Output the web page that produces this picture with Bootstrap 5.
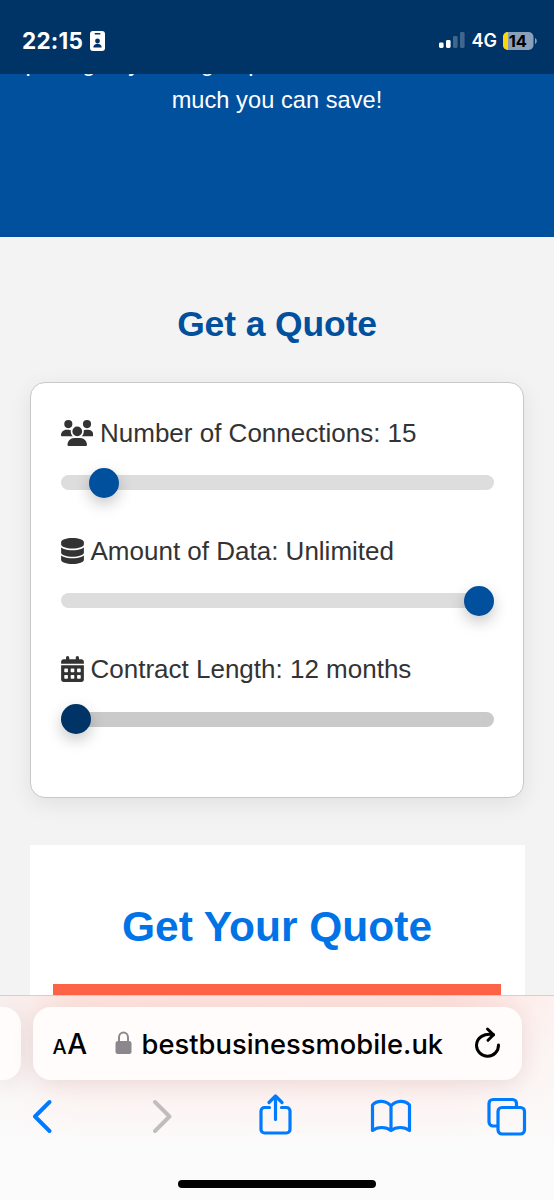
<!DOCTYPE html>
<html lang="en">
<head>
<meta charset="utf-8">
<meta name="viewport" content="width=device-width, initial-scale=1">
<title>Best Business Mobile</title>
<link href="https://cdn.jsdelivr.net/npm/bootstrap@5.3.0/dist/css/bootstrap.min.css" rel="stylesheet">
<style>
  body { font-family: "Liberation Sans", Arial, sans-serif; background: #f3f3f3; color: #333; }
  svg { display: block; flex: none; }
  .screen { width: 554px; height: 1200px; }
  .status { height: 73.5px; background: #036; padding: 8px 16px 0 22px; font-family: Inter, sans-serif; z-index: 2; }
  .clock { font-size: 22.5px; font-weight: 700; letter-spacing: .25px; line-height: 30px; }
  .network { font-size: 18px; font-weight: 600; line-height: 30px; margin: 0 2px 0 7px; }
  .page-view { margin-top: -73.5px; }
  .hero { height: 236.5px; padding-top: 44.5px; background: #00509e; color: #fff; font-size: 23.6px; line-height: 37.8px; letter-spacing: .05px; }
  .hero-text { padding-left: 25.5px; }
  .hero-text span { display: block; white-space: nowrap; }
  .hero-text .closing { margin-left: -25.5px; }
  .quote-title { margin: 66px 0 37px; font-size: 35.45px; line-height: 42px; font-weight: 700; color: #00509e; letter-spacing: -.1px; }
  .quote-card { margin: 0 30px; height: 416px; border: 1.5px solid #c8c8c8; border-radius: 15px; padding: 29px 29.5px 0; box-shadow: 0 6px 22px rgba(0,0,0,.08); }
  .slider-label { font-size: 26px; line-height: 42px; gap: 7px; height: 42px; }
  .slider-label svg { fill: #333; }
  .slider-row { height: 118.2px; }
  .quote-range { height: 30px; margin-top: 14.3px; display: block; }
  .quote-range::-webkit-slider-runnable-track { height: 15px; border-radius: 8px; background: #ddd; }
  .quote-range::-webkit-slider-thumb { width: 30px; height: 30px; margin-top: -7.5px; background: #00509e; box-shadow: 0 6px 15px rgba(0,0,0,.22); }
  .quote-range.pressed::-webkit-slider-runnable-track { background: #cacaca; }
  .quote-range.pressed::-webkit-slider-thumb { background: #036; }
  .form-panel { margin: 47px 29.5px 0; background: #fff; padding: 56.5px 23.5px 0; height: 152px; }
  .form-panel h2 { font-size: 42.5px; line-height: 52px; font-weight: 700; color: #0073e6; margin: 0 0 30.5px; }
  .form-bar { height: 13px; background: #ff6347; }
  .chrome { height: 205px; border-top: 1.5px solid #d9cdcd; font-family: Inter, sans-serif; color: #000; z-index: 3;
    background: linear-gradient(180deg, rgba(251,251,251,0) 0, #fbfbfb 150px), linear-gradient(90deg, #f8f1f0 0, #fee3de 15%, #fee1dc 82%, #fcf1ef 100%); }
  .tabs-row { padding-top: 11px; gap: 12px; }
  .tab-prev, .address { height: 73px; background: #fffcfb; box-shadow: 0 4px 22px rgba(90,40,40,.11); }
  .tab-prev { width: 20.5px; border-radius: 0 18px 18px 0; }
  .address { width: 489px; border-radius: 18px; padding: 3px 20px 0 20px; }
  .aa-small { font-size: 20px; } .aa-big { font-size: 28px; margin-left: .5px; }
  .aa { font-weight: 500; line-height: 34px; width: 62px; padding-top: 2px; }
  .host { font-size: 27.3px; font-weight: 500; letter-spacing: .03px; margin-left: 10px; }
  .tools { margin: 13px 0 0 32px; height: 44px; }
  .home { width: 198px; height: 8px; background: #000; margin: 43px auto 0; border-radius: 4px; }
</style>
</head>
<body>
<div class="screen d-flex flex-column overflow-hidden">
  <header class="status d-flex align-items-center justify-content-between text-white flex-shrink-0 position-relative">
    <div class="d-flex align-items-center">
      <span class="clock">22:15</span>
      <svg style="margin-left:7px" width="15" height="20" viewBox="0 0 15 20"><rect width="15" height="20" rx="3" fill="#fff"/><rect x="4.5" y="2" width="6" height="1.6" rx=".8" fill="#036"/><circle cx="7.5" cy="10" r="2.4" fill="#036"/><path d="M3.3 16.5c0-5 8.400-5 8.400 0z" fill="#036"/></svg>
    </div>
    <div class="d-flex align-items-center">
      <svg width="26" height="17" viewBox="0 0 26 17"><g fill="#fff"><rect x="0" y="10.5" width="4.6" height="5.5" rx="1.4"/><rect x="7" y="8" width="4.6" height="8" rx="1.4"/><g opacity=".25"><rect x="14" y="4" width="4.6" height="12" rx="1.4"/><rect x="21" y="0" width="4.6" height="16" rx="1.4"/></g></g></svg>
      <span class="network">4G</span>
      <span class="ms-1 d-block"><svg width="35" height="20" viewBox="0 -1 35 20"><rect width="30.5" height="18" rx="5" fill="#8aa0b8"/><path d="M5 0v18a5 5 0 0 1-5-5V5a5 5 0 0 1 5-5z" fill="#ffd60a"/><path d="M32 6c2.300 1 2.300 5 0 6z" fill="#8aa0b8"/><text x="14.800" y="15" text-anchor="middle" font-family="Inter" font-size="16.500" font-weight="700" fill="#000">14</text></svg></span>
    </div>
  </header>

  <main class="page-view flex-grow-1 overflow-hidden">
    <section class="hero">
      <p class="hero-text mb-0"><span>pricing any area group and then find out how</span><span class="closing text-center">much you can save!</span></p>
    </section>

    <h2 class="quote-title text-center">Get a Quote</h2>

    <section class="quote-card bg-white">
      <div class="slider-row">
        <label class="slider-label d-flex align-items-center" for="connections">
          <svg width="32.5" height="26" viewBox="0 0 640 512"><path d="M144 0a80 80 0 1 1 0 160A80 80 0 1 1 144 0zM512 0a80 80 0 1 1 0 160A80 80 0 1 1 512 0zM0 298.7C0 239.8 47.8 192 106.7 192h42.7c15.9 0 31 3.5 44.6 9.7c-1.3 7.2-1.9 14.7-1.9 22.3c0 38.2 16.8 72.5 43.3 96H21.3C9.6 320 0 310.4 0 298.7zM405.3 320c26.6-23.5 43.3-57.8 43.3-96c0-7.6-.7-15-1.9-22.3c13.6-6.3 28.7-9.7 44.6-9.7h42.7C592.2 192 640 239.8 640 298.7c0 11.8-9.6 21.3-21.3 21.3H405.3zM224 224a96 96 0 1 1 192 0 96 96 0 1 1 -192 0zM128 485.3C128 411.7 187.7 352 261.3 352H378.7C452.3 352 512 411.7 512 485.3c0 14.7-11.9 26.7-26.7 26.7H154.7c-14.7 0-26.7-11.9-26.7-26.7z"/></svg>
          <span>Number of Connections: 15</span>
        </label>
        <input type="range" class="form-range quote-range" id="connections" min="1" max="200" value="15">
      </div>
      <div class="slider-row">
        <label class="slider-label d-flex align-items-center" for="data">
          <svg width="23" height="26" viewBox="0 0 448 512"><path d="M448 80v48c0 44.2-100.3 80-224 80S0 172.2 0 128V80C0 35.8 100.3 0 224 0S448 35.8 448 80zM393.2 214.7c20.8-7.4 39.9-16.9 54.8-28.6V288c0 44.2-100.3 80-224 80S0 332.2 0 288V186.1c14.9 11.8 34 21.2 54.8 28.6C99.7 230.7 159.5 240 224 240s124.3-9.3 169.2-25.3zM0 346.1c14.9 11.8 34 21.2 54.8 28.6C99.7 390.7 159.5 400 224 400s124.3-9.3 169.2-25.3c20.8-7.4 39.9-16.9 54.8-28.6V432c0 44.2-100.3 80-224 80S0 476.2 0 432V346.1z"/></svg>
          <span>Amount of Data: Unlimited</span>
        </label>
        <input type="range" class="form-range quote-range" id="data" min="0" max="100" value="100">
      </div>
      <div class="slider-row">
        <label class="slider-label d-flex align-items-center" for="contract">
          <svg width="23" height="26" viewBox="0 0 448 512"><path fill-rule="evenodd" d="M128 0c17.7 0 32 14.3 32 32V64H288V32c0-17.7 14.3-32 32-32s32 14.3 32 32V64h48c26.5 0 48 21.5 48 48v40H0V112C0 85.5 21.5 64 48 64H96V32c0-17.7 14.3-32 32-32zM0 180H448V464c0 26.5-21.5 48-48 48H48c-26.5 0-48-21.5-48-48V180zM76 246a14 14 0 0 0-14 14v44a14 14 0 0 0 14 14h44a14 14 0 0 0 14-14v-44a14 14 0 0 0-14-14zM202 246a14 14 0 0 0-14 14v44a14 14 0 0 0 14 14h44a14 14 0 0 0 14-14v-44a14 14 0 0 0-14-14zM328 246a14 14 0 0 0-14 14v44a14 14 0 0 0 14 14h44a14 14 0 0 0 14-14v-44a14 14 0 0 0-14-14zM76 376a14 14 0 0 0-14 14v44a14 14 0 0 0 14 14h44a14 14 0 0 0 14-14v-44a14 14 0 0 0-14-14zM202 376a14 14 0 0 0-14 14v44a14 14 0 0 0 14 14h44a14 14 0 0 0 14-14v-44a14 14 0 0 0-14-14zM328 376a14 14 0 0 0-14 14v44a14 14 0 0 0 14 14h44a14 14 0 0 0 14-14v-44a14 14 0 0 0-14-14z"/></svg>
          <span>Contract Length: 12 months</span>
        </label>
        <input type="range" class="form-range quote-range pressed" id="contract" min="12" max="36" value="12">
      </div>
    </section>

    <section class="form-panel">
      <h2 class="text-center">Get Your Quote</h2>
      <div class="form-bar"></div>
    </section>
  </main>

  <footer class="chrome flex-shrink-0 position-relative">
    <div class="tabs-row d-flex">
      <div class="tab-prev flex-shrink-0"></div>
      <div class="address d-flex align-items-center flex-shrink-0">
        <span class="aa"><span class="aa-small">A</span><span class="aa-big">A</span></span>
        <svg class="mb-1" width="17" height="24" viewBox="0 0 17 24"><rect x=".5" y="10" width="16" height="13" rx="2.5" fill="#8a888d"/><path d="M4 11V6.500a4.500 5 0 0 1 9 0V11" fill="none" stroke="#8a888d" stroke-width="2"/></svg>
        <span class="host">bestbusinessmobile.uk</span>
        <svg class="ms-auto mb-1" width="28" height="34" viewBox="0 0 28 34"><g fill="none" stroke="#000" stroke-width="3" stroke-linecap="round" stroke-linejoin="round"><path d="M19.500 8.700C10.500 7 2.500 11.200 2.500 19.500A11 11 0 0 0 24.500 19"/><path d="M13.500 3l6 5.800-5.500 5.500"/></g></svg>
      </div>
    </div>
    <nav class="tools d-flex">
      <svg width="20" height="44" viewBox="0 0 20 44"><path d="M17.5 9L3 23.500 17.500 38" fill="none" stroke="#007aff" stroke-width="3.900" stroke-linecap="round" stroke-linejoin="round"/></svg>
      <svg style="margin-left:100px" width="20" height="44" viewBox="0 0 20 44"><path d="M3 9l14.500 14.500L3 38" fill="none" stroke="#bfbdbd" stroke-width="3.900" stroke-linecap="round" stroke-linejoin="round"/></svg>
      <svg style="margin-left:86.5px" width="34" height="44" viewBox="0 0 34 44"><g fill="none" stroke="#007aff" stroke-width="3.200" stroke-linecap="round" stroke-linejoin="round"><path d="M10.500 14.500H5.500a3.500 3.500 0 0 0-3.500 3.500v18.500A3.500 3.500 0 0 0 5.500 40h22a3.500 3.500 0 0 0 3.500-3.500V18a3.500 3.500 0 0 0-3.500-3.500H22.500M16.500 26.500V3.500M10 9.500L16.500 3l6.500 6.500"/></g></svg>
      <svg style="margin-left:77px" width="42" height="44" viewBox="0 0 42 44"><path d="M21 13C16 7 7 7 2.500 12v25.500c5-4 13.500-4 18.500 0 5-4 13.500-4 18.500 0V12C35 7 26 7 21 13zv24.500" fill="none" stroke="#007aff" stroke-width="3.200" stroke-linejoin="round"/></svg>
      <svg style="margin-left:75px" width="40" height="44" viewBox="0 0 40 44"><g fill="none" stroke="#007aff" stroke-width="3.200"><rect x="11" y="14.500" width="26.500" height="26.500" rx="4"/><path d="M29.500 14.500v-4A4 4 0 0 0 25.500 6.500H6a4 4 0 0 0-4 4v18.500a4 4 0 0 0 4 4h5"/></g></svg>
    </nav>
    <div class="home"></div>
  </footer>
</div>
<script src="https://cdn.jsdelivr.net/npm/bootstrap@5.3.0/dist/js/bootstrap.bundle.min.js"></script>
</body>
</html>
